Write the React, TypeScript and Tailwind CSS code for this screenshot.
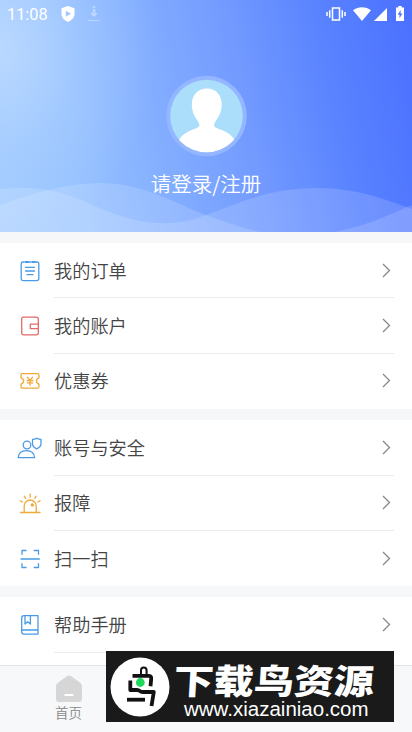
import type { ReactNode } from 'react';

interface MenuItem {
  label: string;
  icon: ReactNode;
}

const iconProps = {
  width: 26,
  height: 26,
  viewBox: '0 0 26 26',
  fill: 'none',
  strokeWidth: 1.3,
  strokeLinecap: 'round' as const,
  strokeLinejoin: 'round' as const,
};

const BLUE = '#4a9ae6';
const RED = '#e26a6a';
const ORANGE = '#f0a93c';

const OrderIcon = () => (
  <svg {...iconProps} stroke={BLUE}>
    <path d="M7 4H6a1.8 1.8 0 0 0-1.8 1.8v15A1.8 1.8 0 0 0 6 22.6h14a1.8 1.8 0 0 0 1.8-1.8v-15A1.8 1.8 0 0 0 20 4h-1M12 4h2" />
    <path d="M8.5 4H11M15.5 4H18" strokeWidth="2.2" />
    <path d="M8.5 9.3h9M8.5 13h9M10 16.7h6" />
  </svg>
);

const WalletIcon = () => (
  <svg {...iconProps} stroke={RED}>
    <path d="M6.5 4.2h13A1.8 1.8 0 0 1 21.3 6v14a1.8 1.8 0 0 1-1.8 1.8h-13A1.8 1.8 0 0 1 4.7 20V6a1.8 1.8 0 0 1 1.8-1.8z" />
    <path d="M21.3 11.2h-8v4.400h8" />
  </svg>
);

const CouponIcon = () => (
  <svg {...iconProps} stroke={ORANGE}>
    <path d="M5.5 5.700h15q1.500 0 1.500 1.500v2.600c-1.700.6-2.600 1.800-2.600 3.200s.9 2.600 2.600 3.200v2.500q0 1.500-1.500 1.500h-15Q4 20.200 4 18.700v-2.500c1.700-.6 2.600-1.800 2.600-3.200S5.700 10.400 4 9.800V7.200q0-1.500 1.500-1.500z" />
    <path d="M10.5 9.300l2.500 3 2.500-3M13 12.300v5M10.200 12.500h5.600M10.200 14.800h5.600" />
  </svg>
);

const AccountIcon = () => (
  <svg {...iconProps} stroke={BLUE}>
    <circle cx="10" cy="10" r="3.8" />
    <path d="M1.200 22.700c.3-4.700 3.600-7 8.200-7s7.800 2.300 8.200 7z" />
    <path d="M19.700 3.200c-1.500 1-2.700 1.200-4.200 1.200v4.400c0 2.600 1.800 4 4.200 5 2.500-1 4.300-2.400 4.300-5V4.400c-1.500 0-2.800-.2-4.300-1.200z" />
  </svg>
);

const AlarmIcon = () => (
  <svg {...iconProps} stroke={ORANGE}>
    <path d="M7.200 22v-6a6 6 0 0 1 12 0v6M3.500 22.500h19.500" />
    <path d="M13.200 4v3.200M7.300 6.200l1.300 2.200M19.100 6.200l-1.300 2.200M3.300 10.700l2.200 1.300M23.100 10.700l-2.200 1.300" />
    <circle cx="15.3" cy="15" r="1" fill={ORANGE} />
  </svg>
);

const ScanIcon = () => (
  <svg {...iconProps} stroke={BLUE}>
    <path d="M5 8.300V4.500h4M17.200 4.500h4.300v3.800M5 17.700v3.800h4M17.200 21.500h4.300v-3.800" />
    <path d="M4.200 13h18" strokeWidth="1.6" />
  </svg>
);

const BookIcon = () => (
  <svg {...iconProps} stroke={BLUE}>
    <path d="M7 3.700h14v18.400H7a2.300 2.300 0 0 1-2.300-2.300V6A2.300 2.300 0 0 1 7 3.700zM5 18h16" />
    <path d="M8 4v8l2.700-2.300L13.400 12V4" />
  </svg>
);

const menuGroups: MenuItem[][] = [
  [
    { label: '我的订单', icon: <OrderIcon /> },
    { label: '我的账户', icon: <WalletIcon /> },
    { label: '优惠券', icon: <CouponIcon /> },
  ],
  [
    { label: '账号与安全', icon: <AccountIcon /> },
    { label: '报障', icon: <AlarmIcon /> },
    { label: '扫一扫', icon: <ScanIcon /> },
  ],
  [
    { label: '帮助手册', icon: <BookIcon /> },
  ],
];

const StatusBar = () => (
  <div className="flex h-7 items-center justify-between px-[7px] text-white">
    <div className="flex items-center">
      <span className="w-[54px] pt-px font-['Roboto',sans-serif] text-[16.3px] leading-7">11:08</span>
      <svg width="14" height="16" viewBox="0 0 14 16" fill="currentColor">
        <path fillRule="evenodd" d="M7 0l6.500 2.300v5.500c0 3.800-2.600 6.500-6.500 8.200C3.100 14.300.5 11.600.5 7.800V2.300zM4.800 4.700v6L10 7.700z" />
      </svg>
      <svg className="ml-[13px] opacity-35" width="12" height="16" viewBox="0 0 12 16" fill="currentColor">
        <path d="M4.700 3h2.600v4H10l-4 4-4-4h2.700zM0 14h12v1H0z" />
        <path d="M4.700 0h2.600v2H4.700z" />
      </svg>
    </div>
    <div className="flex items-center">
      <svg width="20" height="14" viewBox="0 0 20 14" fill="none" stroke="currentColor" strokeWidth="1.5">
        <path d="M6.500 1h7v12h-7zM1 5v4M3.700 3.200v7.600M16.300 3.200v7.600M19 5v4" />
      </svg>
      <svg className="ml-[7px]" width="18" height="14" viewBox="0 0 18 14" fill="currentColor">
        <path d="M0 3.200C5.200-.9 12.800-.9 18 3.200L9 14z" />
      </svg>
      <svg className="ml-[3px]" width="13" height="13" viewBox="0 0 13 13" fill="currentColor">
        <path d="M13 0v13H0z" />
      </svg>
      <svg className="-mt-px ml-[9px] mr-px" width="8" height="15" viewBox="0 0 8 15" fill="currentColor">
        <path fillRule="evenodd" d="M2.300 0h3.400v1.500H8V15H0V1.500h2.300zM4.600 4L1.700 8.700h1.800v3.600l2.900-4.800H4.600z" />
      </svg>
    </div>
  </div>
);

const Avatar = () => (
  <svg width="82" height="82" viewBox="0 0 82 82">
    <defs>
      <clipPath id="avatar">
        <circle cx="41.5" cy="41" r="36.3" />
      </clipPath>
    </defs>
    <circle cx="41.5" cy="41" r="40.3" fill="#94b5ff" />
    <circle cx="41.5" cy="41" r="36.3" fill="#abdefb" />
    <path
      clipPath="url(#avatar)"
      fill="#fff"
      d="M42 13.500c9 0 14.700 6.500 14.700 15.700 0 8-3.400 13-6.700 18-1.500 2.500-1.200 4.500 1 5.600 8 3 15.500 6.200 19 12.700V82H13.500V65.500c3.500-6.500 11-9.700 19-12.700 2.200-1.100 2.500-3.100 1-5.600-3.300-5-6.700-10-6.700-18 0-9.200 6.200-15.700 15.200-15.700z"
    />
  </svg>
);

const ProfileHeader = () => (
  <header className="relative h-[231.5px] bg-[radial-gradient(ellipse_38%_85%_at_0%_22%,rgba(196,222,255,0.75)_0%,rgba(185,216,255,0.35)_50%,rgba(160,200,255,0)_100%),linear-gradient(79deg,#9fcaff_0%,#94c0ff_20%,#82adff_40%,#7199ff_60%,#5882ff_80%,#4b70ff_100%)]">
    <svg className="absolute inset-0 h-full w-full" viewBox="0 0 412 231.5" fill="#fff" fillOpacity="0.15">
      <path d="M0 205C35 193 65 183 100 183c45 0 75 21 106 32 20 7 36 13 54 17H0z" />
      <path d="M0 189c50-6 75 9 110 23 40 16 70 13 96 3 40-15 66-27 112-27 38 0 66 11 94 21v23H0z" />
      <path d="M335 232c30-6 52-16 77-27v27z" />
    </svg>
    <div className="relative flex flex-col items-center">
      <div className="w-full">
        <StatusBar />
      </div>
      <div className="mt-[47px]">
        <Avatar />
      </div>
      <button className="mt-[11px] text-[20.5px] font-[350] leading-[30px] text-white">请登录/注册</button>
    </div>
  </header>
);

const MenuRow = ({ item, last }: { item: MenuItem; last: boolean }) => (
  <li className="flex h-[55.4px] items-center pl-[17px] pr-[18px]">
    <span className="flex w-[37px] shrink-0">{item.icon}</span>
    <div className={`flex h-full flex-1 items-center justify-between border-b ${last ? 'border-transparent' : 'border-[#ebebeb]'}`}>
      <span className="text-[18.2px] font-[350] text-[#444]">{item.label}</span>
      <svg className="mr-[3px]" width="9" height="15" viewBox="0 0 9 15" fill="none" stroke="#888" strokeWidth="1.3">
        <path d="M1 1l6.500 6.500L1 14" />
      </svg>
    </div>
  </li>
);

const Watermark = () => (
  <div className="absolute left-[106px] top-[651px] flex h-[71px] w-[288px] bg-[#1a1a1a] text-white">
    <svg className="ml-[4px] mt-[6px] shrink-0" width="60" height="60" viewBox="0 0 60 60" fill="none">
      <circle cx="30" cy="30" r="29.5" fill="#fff" />
      <g stroke="#111" strokeWidth="3.8" strokeLinejoin="round">
        <path d="M31 17v-3.500q0-3 2.800-3t2.800 3V17" strokeWidth="2" />
        <path d="M22.500 18.800h16q3 0 2.700 3l-.7 7.500" />
        <path d="M20.300 23.500v9.500h6.500q2 0 3 1t3 1h11L41.500 49" />
        <path d="M17 42.700h18" />
      </g>
      <circle cx="30.3" cy="25.5" r="4.4" fill="#20d95b" />
    </svg>
    <div className="flex-1">
      <div className="ml-[4px] mt-[7px] w-[178px] origin-left -skew-x-3 scale-x-[1.16] whitespace-nowrap text-[34.5px] font-black leading-[42px]">下载鸟资源</div>
      <div className="-mt-[2px] ml-[14px] font-['Liberation_Sans',Arial,sans-serif] text-[20.5px] leading-[22px]">www.xiazainiao.com</div>
    </div>
  </div>
);

const App = () => {
  return (
    <div className="relative flex h-[732px] w-[412px] flex-col overflow-hidden bg-[#f5f7f9] font-['Noto_Sans_CJK_SC',sans-serif]">
      <ProfileHeader />

      {/* Menu */}
      <main className="flex h-[433.5px] flex-col gap-[11px] overflow-hidden pt-[11.5px]">
        {menuGroups.map((group, i) => (
          <ul key={i} className={`shrink-0 bg-white ${i === menuGroups.length - 1 ? 'pb-3' : ''}`}>
            {group.map((item, j) => (
              <MenuRow key={item.label} item={item} last={group.length > 1 && j === group.length - 1} />
            ))}
          </ul>
        ))}
      </main>

      {/* Bottom tab bar */}
      <nav className="flex flex-1 border-t border-[#e3e4e6] bg-[#f7f8fa]">
        <div className="flex w-[137px] flex-col items-center pt-[9px]">
          <svg width="28" height="28" viewBox="0 0 28 28">
            <path d="M11.8 1.3q2.200-1.600 4.400 0l9 6.400q1.800 1.400 1.800 3.500V24q0 3-3 3H4q-3 0-3-3V11.200q0-2.100 1.800-3.500z" fill="#d6d6d6" />
            <path d="M9.500 20h9" stroke="#fff" strokeWidth="2" />
          </svg>
          <span className="-mt-px text-[13.5px] font-[350] leading-5 text-[#888]">首页</span>
        </div>
      </nav>

      <Watermark />
    </div>
  );
};

export default App;
